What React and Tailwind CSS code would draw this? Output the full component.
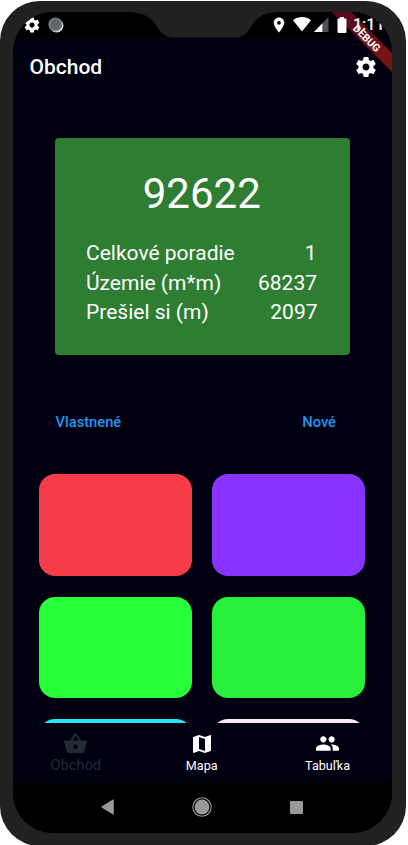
import { MdLocationOn, MdShoppingBasket, MdMap, MdPeople } from "react-icons/md";

const GEAR =
  "M19.43 12.98c.04-.32.07-.64.07-.98s-.03-.66-.07-.98l2.11-1.65c.19-.15.24-.42.12-.64l-2-3.46c-.12-.22-.39-.3-.61-.22l-2.49 1c-.52-.4-1.08-.73-1.69-.98l-.38-2.65C14.46 2.18 14.25 2 14 2h-4c-.25 0-.46.18-.49.42l-.38 2.65c-.61.25-1.17.59-1.69.98l-2.49-1c-.23-.09-.49 0-.61.22l-2 3.46c-.13.22-.07.49.12.64l2.11 1.65c-.04.32-.07.65-.07.98s.03.66.07.98l-2.11 1.65c-.19.15-.24.42-.12.64l2 3.46c.12.22.39.3.61.22l2.49-1c.52.4 1.08.73 1.69.98l.38 2.65c.03.24.24.42.49.42h4c.25 0 .46-.18.49-.42l.38-2.65c.61-.25 1.17-.59 1.69-.98l2.49 1c.23.09.49 0 .61-.22l2-3.46c.12-.22.07-.49-.12-.64l-2.11-1.65zM12 15.5c-1.93 0-3.5-1.57-3.5-3.5s1.57-3.5 3.5-3.5 3.5 1.57 3.5 3.5-1.57 3.5-3.5 3.5z";

function Gear({ size }) {
  return (
    <svg width={size} height={size} viewBox="0 0 24 24" fill="currentColor" className="shrink-0">
      <path d={GEAR} />
    </svg>
  );
}

const stats = [
  { label: "Celkové poradie", value: "1", pad: "pr-[1px]" },
  { label: "Územie (m*m)", value: "68237", pad: "pr-[0.5px]" },
  { label: "Prešiel si (m)", value: "2097", pad: "" },
];

const tiles = [
  "bg-[#f63c49]",
  "bg-[#8833ff]",
  "bg-[#26ff39]",
  "bg-[#28f03a]",
  "bg-[#26e6f6]",
  "bg-[#ffe6f2]",
];

function StatusBar() {
  return (
    <div className="h-[25px] shrink-0 bg-black">
      <div className="relative z-10 flex h-[25px] items-center pl-[10px]">
        <Gear size={18} />
        <svg className="ml-[7px] shrink-0" width="16" height="16" viewBox="0 0 16 16">
          <circle cx="8.6" cy="8.6" r="6.9" fill="#d8dcde" />
          <circle cx="7.4" cy="7.4" r="7" fill="#7b8184" />
          <circle cx="7.5" cy="7.5" r="5.4" fill="#5f666a" />
        </svg>
        <MdLocationOn className="ml-[206px] shrink-0" size={18} />
        <svg className="ml-[5px] shrink-0" width="18" height="15" viewBox="0 0 18 15" fill="#fff">
          <path d="M0 3.2C5.2-1 12.8-1 18 3.2L9 14.6z" />
        </svg>
        <svg className="ml-[3px] shrink-0" width="15" height="15" viewBox="0 0 15 15">
          <path d="M14.5 0v15H0z" fill="#4c5357" />
          <path d="M8.4 6.3V15H0z" fill="#fff" />
        </svg>
        <svg className="ml-[8px] shrink-0" width="10" height="16" viewBox="0 0 10 16" fill="#fff">
          <path d="M3 0h4v1.6h1.6c.5 0 .9.4.9.9v12.6c0 .5-.4.9-.9.9H1.4c-.5 0-.9-.4-.9-.9V2.500c0-.5.4-.9.9-.9H3z" />
        </svg>
        <span className="ml-[6px] pt-px text-[16px] leading-none font-medium whitespace-nowrap">
          1:11
        </span>
      </div>
    </div>
  );
}

function NavItem({ icon, label, active }) {
  return (
    <div
      className={
        active
          ? "flex flex-1 flex-col items-center pt-[8px] text-[#212b33]"
          : "flex flex-1 flex-col items-center pt-[8px] text-white"
      }
    >
      <div className="flex h-[25px] items-center">{icon}</div>
      <span
        className={
          active
            ? "mt-[1px] text-[14.6px] leading-[17px] tracking-[0.1px]"
            : "mt-[2px] text-[12.6px] leading-[16px]"
        }
      >
        {label}
      </span>
    </div>
  );
}

export default function App() {
  return (
    <div className="h-[845px] w-[408px] overflow-hidden bg-white pt-px font-['Roboto',sans-serif] text-white">
      <div className="relative h-[845px] w-[406px] rounded-[40px] bg-[#212121] pt-[11px] pr-[14px] pl-[13px]">
        <div className="relative flex h-[821px] flex-col overflow-hidden rounded-[40px] bg-[#000011]">
          <StatusBar />

          <header className="flex h-[60px] shrink-0 items-center justify-between pr-[14px] pl-[16.5px]">
            <h1 className="pt-[2px] text-[21px] font-medium">Obchod</h1>
            <div className="pb-px">
              <Gear size={24} />
            </div>
          </header>

          <main className="flex min-h-0 flex-1 flex-col overflow-hidden">
            <section className="mt-[41px] mr-[42.5px] ml-[41.5px] h-[216.5px] shrink-0 rounded-[4px] bg-[#2e7d32] pr-[32px] pl-[31.5px]">
              <div className="pt-[30px] text-center text-[42px] leading-[52px]">92622</div>
              <div className="mt-[19px] text-[21px] leading-[29.5px]">
                {stats.map((s) => (
                  <div key={s.label} className="flex justify-between">
                    <span>{s.label}</span>
                    <span className={s.pad}>{s.value}</span>
                  </div>
                ))}
              </div>
            </section>

            <div className="mt-[57.5px] flex h-[20px] shrink-0 items-center justify-between pr-[56px] pl-[42.5px] text-[14.7px] font-medium text-[#2196f3]">
              <span>Vlastnené</span>
              <span>Nové</span>
            </div>

            <div className="mt-[42px] grid shrink-0 grid-cols-2 gap-x-[20.5px] gap-y-[21px] pr-[27px] pl-[26px]">
              {tiles.map((color) => (
                <div key={color} className={`h-[101.5px] rounded-[16px] ${color}`} />
              ))}
            </div>
          </main>

          <nav className="flex h-[59px] shrink-0 pr-[1.5px]">
            <NavItem active icon={<MdShoppingBasket size={25} />} label="Obchod" />
            <NavItem icon={<MdMap size={24} />} label="Mapa" />
            <NavItem icon={<MdPeople size={25} />} label="Tabuľka" />
          </nav>

          <div className="flex h-[51px] shrink-0 items-center bg-black pb-px pl-[88px]">
            <svg width="13" height="16" viewBox="0 0 13 16" fill="#999">
              <path d="M12 .5c.5-.2.8 0 .8.500v14c0 .5-.3.7-.8.500L.6 8.500c-.4-.3-.4-.7 0-1z" />
            </svg>
            <svg className="ml-[78px]" width="20" height="20" viewBox="0 0 20 20">
              <circle cx="10" cy="10" r="9.2" fill="none" stroke="#999" strokeWidth="1.1" />
              <circle cx="10" cy="10" r="7.4" fill="#999" />
            </svg>
            <div className="ml-[78px] h-[13px] w-[13px] rounded-[1px] bg-[#999]" />
          </div>

          <svg className="absolute top-0 right-0" width="60" height="60" viewBox="0 0 60 60">
            <path d="M0 0H19L60 41V60z" fill="#761414" />
            <path d="M0 0H19L44 25H25z" fill="#5c0b1c" />
            <text
              transform="translate(35 26) rotate(45)"
              textAnchor="middle"
              y="4"
              fill="#fff"
              fontSize="10.5"
              fontWeight="700"
              fontFamily="Roboto"
            >
              DEBUG
            </text>
          </svg>
        </div>

        <svg className="absolute top-[11px] left-[126px]" width="154" height="26" viewBox="0 0 154 26">
          <path
            d="M0 0H154C138 0 131 5 124 16C119 23 116 25.500 109 25.500H48C41 25.500 37 23 32 16C25 5 18 0 0 0z"
            fill="#212121"
          />
        </svg>
      </div>
    </div>
  );
}
